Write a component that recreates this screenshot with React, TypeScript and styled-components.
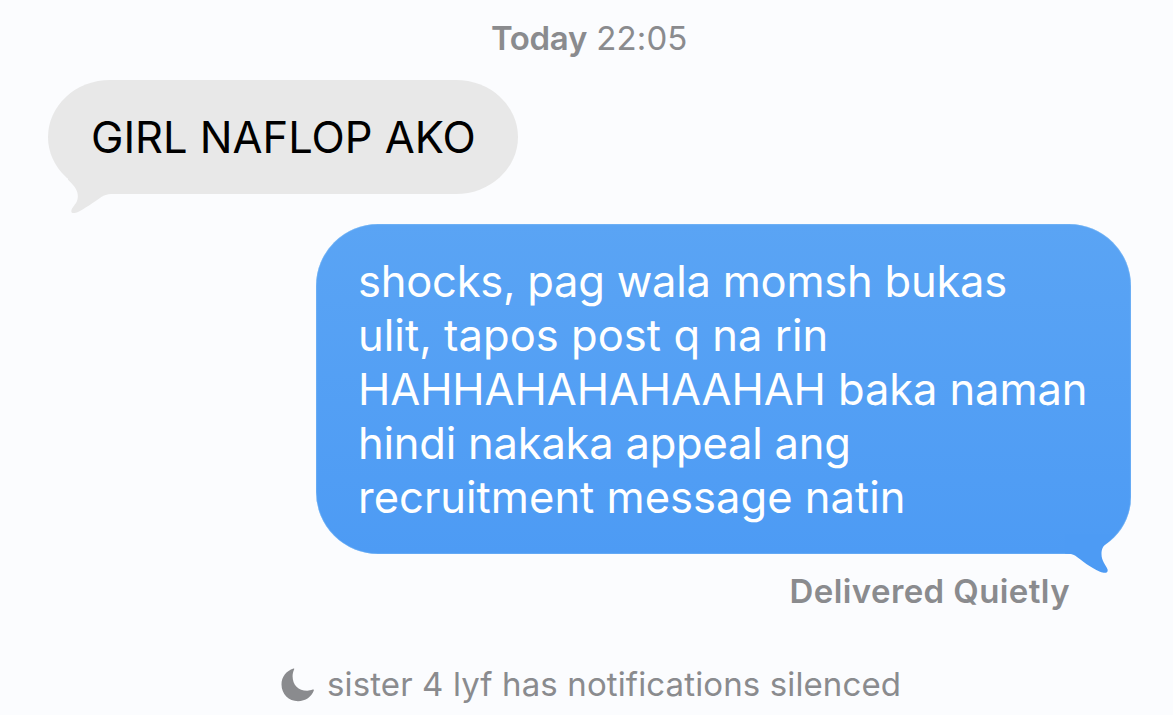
import React from 'react';
import styled, {createGlobalStyle} from "styled-components";

const theme = {
    bg: "#fbfcfe",
    incoming: "#e8e8e8",
    outgoingTop: "#5aa4f4",
    outgoingBottom: "#4d9bf4",
    outgoingEdge: "rgba(160, 210, 248, 0.55)",
    muted: "#8a8b8e",
}

const lines = [
    {text: "shocks, pag wala momsh bukas", spacing: "-0.24px"},
    {text: "ulit, tapos post q na rin", spacing: "0.04px"},
    {text: "HAHHAHAHAHAAHAH baka naman", spacing: "-0.1px"},
    {text: "hindi nakaka appeal ang", spacing: "-0.22px"},
    {text: "recruitment message natin", spacing: "0.02px"},
];

export default function App() {
    return (
        <>
            <GlobalStyle/>
            <Chat>
                <Timestamp><b>Today</b> 22:05</Timestamp>

                <IncomingBubble>
                    <Line spacing={"-0.03px"}>GIRL NAFLOP AKO</Line>
                    <IncomingTail viewBox="68 170 52 46">
                        <path d="M66 178C77 188 79 193 77.3 200C76.5 204 71 208 71.3 211.6C71.6 213.8 75 213.4 79 211.4C89 206.5 97 199.5 104 195.6Q108 193.7 114 193.7V170H66Z"/>
                    </IncomingTail>
                </IncomingBubble>

                <OutgoingBubble>
                    {lines.map((line) => (
                        <Line key={line.text} spacing={line.spacing}>{line.text}</Line>
                    ))}
                    <OutgoingTail viewBox="1060 520 60 56">
                        <path d="M1115.5 534C1112.5 538 1109.5 541 1106 543.8C1103 546.5 1101.5 549 1101.5 554C1101.4 561 1106 565 1107.6 569.5C1108.4 573 1105 573.8 1100 571.7C1090 567.5 1082 560.5 1075 555.5Q1072 553.6 1065 553.5V534Z"/>
                    </OutgoingTail>
                </OutgoingBubble>

                <Status>Delivered Quietly</Status>

                <Silenced>
                    <Moon viewBox="0 0 34 34">
                        <path d="M12.5 .6C5.3 3 .5 9 .5 16.5C.5 26 7.8 33.2 17 33.2C24.5 33.2 30.7 28.8 32.8 22.6C33.1 21.7 32.5 21.2 31.7 21.6C29.8 22.4 28.2 22.7 26.2 22.7C17.3 22.7 11.6 17 11.6 8.3C11.6 6 12.2 3.6 13.1 1.6C13.4 .9 13.2 .4 12.5 .6Z"/>
                    </Moon>
                    <span>sister 4 lyf has notifications silenced</span>
                </Silenced>
            </Chat>
        </>
    );
}

const GlobalStyle = createGlobalStyle`
    * {
        box-sizing: border-box;
    }

    body {
        margin: 0;
        background: ${theme.bg};
        font-family: Inter, "Liberation Sans", sans-serif;
    }
`

const Chat = styled.main`
    display: flex;
    flex-direction: column;
    width: 1173px;
    height: 715px;
    padding: 17px 42px 0 48px;
    overflow: hidden;
    background: ${theme.bg};
`

const Timestamp = styled.div`
    height: 42px;
    margin-bottom: 21px;
    padding-left: 443px;
    line-height: 42px;
    font-size: 33px;
    letter-spacing: 0.1px;
    white-space: nowrap;
    color: ${theme.muted};

    b {
        font-weight: 600;
        letter-spacing: -0.35px;
    }
`

const Bubble = styled.div`
    position: relative;
    flex-shrink: 0;
`

const IncomingBubble = styled(Bubble)`
    width: 470px;
    height: 113.5px;
    padding: 30px 43px;
    border-radius: 62px / 57px;
    background: ${theme.incoming};
    color: #000;
`

const OutgoingBubble = styled(Bubble)`
    align-self: flex-end;
    width: 815px;
    height: 330px;
    margin-top: 30.5px;
    padding: 30px 42px;
    border-radius: 62px 62px 57px 62px;
    background: linear-gradient(${theme.outgoingTop}, ${theme.outgoingBottom});
    box-shadow: inset 0 0 1px 0.5px ${theme.outgoingEdge};
    color: #fff;
`

const Line = styled.span<{ spacing: string }>`
    display: block;
    height: 54px;
    line-height: 54px;
    font-size: 43.5px;
    letter-spacing: ${({spacing}) => spacing};
    white-space: nowrap;
`

const Tail = styled.svg`
    position: absolute;
`

const IncomingTail = styled(Tail)`
    left: 20px;
    top: 90px;
    width: 52px;
    height: 46px;
    fill: ${theme.incoming};
`

const OutgoingTail = styled(Tail)`
    right: 11px;
    top: 296px;
    width: 60px;
    height: 56px;
    fill: ${theme.outgoingBottom};
`

const Status = styled.div`
    margin-top: 16px;
    padding-right: 61px;
    height: 42px;
    line-height: 42px;
    font-size: 33px;
    font-weight: 600;
    letter-spacing: 0.4px;
    text-align: right;
    white-space: nowrap;
    color: ${theme.muted};
`

const Silenced = styled.div`
    display: flex;
    align-items: center;
    gap: 12px;
    height: 42px;
    margin-top: 51px;
    padding-left: 233px;
    font-size: 33px;
    letter-spacing: 0.12px;
    white-space: nowrap;
    color: ${theme.muted};
`

const Moon = styled.svg`
    width: 34px;
    height: 34px;
    margin-top: 2px;
    fill: currentColor;
`
